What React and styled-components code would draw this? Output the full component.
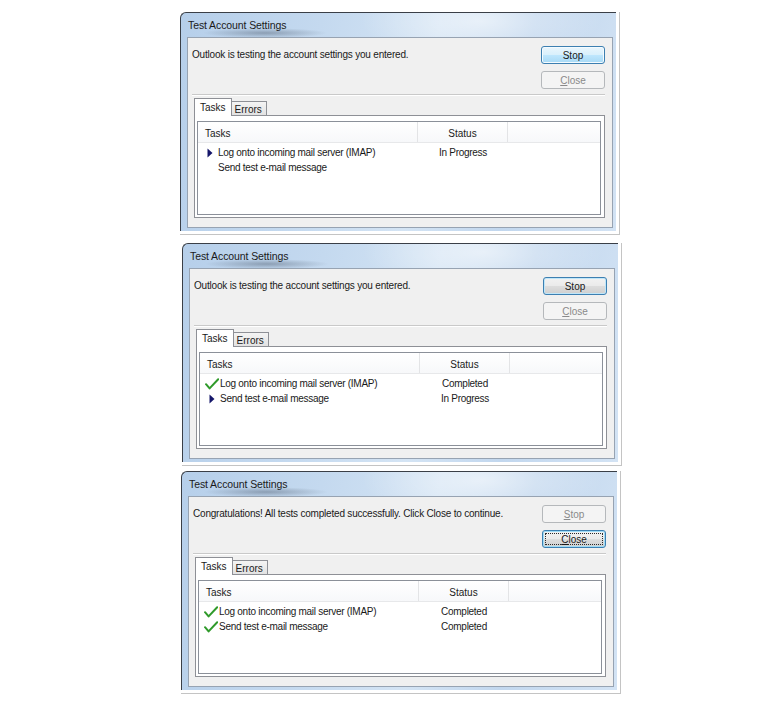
import React from "react";
import styled, { createGlobalStyle } from "styled-components";

const GlobalStyle = createGlobalStyle`
  body {
    margin: 0;
    background: #ffffff;
    font-family: "Liberation Sans", Arial, sans-serif;
  }
`;

const dialogs = [
  {
    shift: 0,
    gap: 0,
    message: "Outlook is testing the account settings you entered.",
    stop: "hot",
    close: "disabled",
    stopKey: false,
    tasks: [
      { name: "Log onto incoming mail server (IMAP)", icon: "arrow", status: "In Progress" },
      { name: "Send test e-mail message", icon: null, status: "" },
    ],
  },
  {
    shift: 2,
    gap: 8,
    message: "Outlook is testing the account settings you entered.",
    stop: "default",
    close: "disabled",
    stopKey: false,
    tasks: [
      { name: "Log onto incoming mail server (IMAP)", icon: "check", status: "Completed" },
      { name: "Send test e-mail message", icon: "arrow", status: "In Progress" },
    ],
  },
  {
    shift: 1,
    gap: 5,
    message:
      "Congratulations! All tests completed successfully. Click Close to continue.",
    stop: "disabled",
    close: "focused",
    stopKey: true,
    tasks: [
      { name: "Log onto incoming mail server (IMAP)", icon: "check", status: "Completed" },
      { name: "Send test e-mail message", icon: "check", status: "Completed" },
    ],
  },
];

const Arrow = () => (
  <svg width="6" height="10" viewBox="0 0 6 10">
    <polygon points="0.5,0.5 5.5,5 0.5,9.5" fill="#15166a" />
  </svg>
);

const Check = () => (
  <svg width="14" height="12" viewBox="0 0 14 12">
    <path
      d="M1 6.2 L4.6 10.4 L13.2 1.2"
      fill="none"
      stroke="#2f9a2a"
      strokeWidth="2"
      strokeLinecap="round"
      strokeLinejoin="round"
    />
  </svg>
);

const Dialog = ({ d }) => (
  <Shot $shift={d.shift} $gap={d.gap}>
    <Frame>
      <TitleBar>Test Account Settings</TitleBar>
      <Body>
        <TopRow>
          <Message>{d.message}</Message>
          <Buttons>
            <Button $kind={d.stop}>
              <Label $kind={d.stop}>
                {d.stopKey ? (
                  <>
                    <u>S</u>top
                  </>
                ) : (
                  "Stop"
                )}
              </Label>
            </Button>
            <Button $kind={d.close}>
              <Label $kind={d.close}>
                <u>C</u>lose
              </Label>
            </Button>
          </Buttons>
        </TopRow>
        <Separator />
        <TabStrip>
          <Tab $active>Tasks</Tab>
          <Tab>Errors</Tab>
        </TabStrip>
        <TabPanel>
          <List>
            <HeaderRow>
              <HeadCell $w={220} $first>
                Tasks
              </HeadCell>
              <HeadCell $w={90} $center>
                Status
              </HeadCell>
              <HeadCell $grow />
            </HeaderRow>
            <Rows>
              {d.tasks.map((t) => (
                <Row key={t.name}>
                  <IconCell>
                    {t.icon === "arrow" && <Arrow />}
                    {t.icon === "check" && <Check />}
                  </IconCell>
                  <NameCell>{t.name}</NameCell>
                  <StatusCell>{t.status}</StatusCell>
                </Row>
              ))}
            </Rows>
          </List>
        </TabPanel>
      </Body>
    </Frame>
  </Shot>
);

export default function App() {
  return (
    <>
      <GlobalStyle />
      <Page>
        {dialogs.map((d, i) => (
          <Dialog key={i} d={d} />
        ))}
      </Page>
    </>
  );
}

const Page = styled.div`
  padding: 12px 0 0 180px;
  display: flex;
  flex-direction: column;
  align-items: flex-start;
`;

const Shot = styled.div`
  width: 440px;
  box-sizing: border-box;
  margin-left: ${(p) => p.$shift}px;
  margin-top: ${(p) => p.$gap}px;
  padding: 0 3px 3px 0;
  border-right: 1px solid #c4c4c4;
  border-bottom: 1px solid #c4c4c4;
  background: #ffffff;
`;

const Frame = styled.div`
  border-top: 1px solid #3a3f47;
  border-left: 1px solid #3a3f47;
  border-top-left-radius: 6px;
  padding: 0 3px 3px 6px;
  background:
    radial-gradient(ellipse 62px 5px at 84px 20px, rgba(70, 82, 100, 0.42), rgba(70, 82, 100, 0) 100%),
    radial-gradient(ellipse 120px 40px at 300px 8px, rgba(255, 255, 255, 0.55), rgba(255, 255, 255, 0) 100%),
    linear-gradient(100deg, #b6cfea 0%, #c4d9ef 30%, #d4e4f4 55%, #c2d7ee 75%, #d3e3f4 100%);
`;

const TitleBar = styled.div`
  height: 24px;
  line-height: 25px;
  padding-left: 1px;
  font-size: 10.5px;
  letter-spacing: -0.1px;
  color: #1a1a1a;
`;

const Body = styled.div`
  border: 1px solid #97a3b2;
  background: #f0f0f0;
  padding: 8px 7px 9px 4px;
  display: flex;
  flex-direction: column;
`;

const TopRow = styled.div`
  display: flex;
  justify-content: space-between;
  align-items: flex-start;
`;

const Message = styled.div`
  font-size: 10px;
  letter-spacing: -0.2px;
  color: #1a1a1a;
  padding-top: 2px;
  line-height: 14px;
`;

const Buttons = styled.div`
  display: flex;
  flex-direction: column;
  gap: 7px;
`;

const buttonLook = {
  hot: `
    border-color: #3c7fb1;
    background: linear-gradient(#eaf6fd 0%, #d9f0fc 48%, #bee6fd 52%, #a7d9f5 100%);
    box-shadow: inset 0 0 0 1px #f4fbff;
    color: #1a1a1a;
  `,
  default: `
    border-color: #3c7fb1;
    background: linear-gradient(#f2f2f2 0%, #ebebeb 48%, #dddddd 52%, #cfcfcf 100%);
    box-shadow: inset 0 0 0 1px #bfe6f9;
    color: #1a1a1a;
  `,
  focused: `
    border-color: #3c7fb1;
    background: linear-gradient(#f2f2f2 0%, #ebebeb 48%, #dddddd 52%, #cfcfcf 100%);
    box-shadow: inset 0 0 0 1px #9fdcf7;
    color: #1a1a1a;
  `,
  disabled: `
    border-color: #b5b8bb;
    background: #f4f4f4;
    color: #8a8a8a;
  `,
};

const Button = styled.div`
  width: 64px;
  height: 18px;
  box-sizing: border-box;
  border: 1px solid;
  border-radius: 3px;
  display: flex;
  align-items: center;
  justify-content: center;
  padding: 2px;
  font-size: 10px;
  ${(p) => buttonLook[p.$kind]}
`;

const Label = styled.span`
  flex: 1;
  align-self: stretch;
  display: flex;
  align-items: center;
  justify-content: center;
  border: 1px dotted ${(p) => (p.$kind === "focused" ? "#2a2a2a" : "transparent")};
  u {
    text-decoration-thickness: 1px;
    text-underline-offset: 1px;
  }
`;

const Separator = styled.div`
  margin-top: 5px;
  height: 0;
  border-top: 1px solid #c9c9c9;
  border-bottom: 1px solid #ffffff;
`;

const TabStrip = styled.div`
  margin: 2px 0 0 2px;
  display: flex;
  align-items: flex-end;
  position: relative;
  z-index: 1;
`;

const Tab = styled.div`
  box-sizing: border-box;
  font-size: 10px;
  color: #1a1a1a;
  border: 1px solid #8e9096;
  border-bottom: none;
  ${(p) =>
    p.$active
      ? `
    height: 18px;
    padding: 3px 5px 0 5px;
    background: #ffffff;
    margin-bottom: -1px;
  `
      : `
    height: 14px;
    padding: 2px 4px 0 3px;
    border-left: none;
    background: linear-gradient(#f4f4f4, #e2e2e2);
  `}
`;

const TabPanel = styled.div`
  margin-left: 2px;
  border: 1px solid #8e9096;
  background: #ffffff;
  padding: 5px 3px 2px 2px;
`;

const List = styled.div`
  height: 94px;
  box-sizing: border-box;
  border: 1px solid #8b9099;
  background: #ffffff;
  font-size: 10px;
  color: #1a1a1a;
`;

const HeaderRow = styled.div`
  display: flex;
  height: 21px;
  box-sizing: border-box;
  border-bottom: 1px solid #e7e8ea;
  background: linear-gradient(#ffffff, #f7f8fa);
`;

const HeadCell = styled.div`
  ${(p) => (p.$grow ? "flex: 1;" : `width: ${p.$w}px;`)}
  box-sizing: border-box;
  display: flex;
  align-items: center;
  justify-content: ${(p) => (p.$center ? "center" : "flex-start")};
  padding-top: 2px;
  padding-left: ${(p) => (p.$first ? 7 : 0)}px;
  border-right: ${(p) => (p.$grow ? "none" : "1px solid #e3e4e6")};
`;

const Rows = styled.div`
  padding-top: 2px;
  letter-spacing: -0.28px;
`;

const Row = styled.div`
  display: flex;
  align-items: center;
  height: 15px;
`;

const IconCell = styled.div`
  width: 20px;
  padding-left: 4px;
  box-sizing: border-box;
  display: flex;
  justify-content: center;
  align-items: center;
`;

const NameCell = styled.div`
  width: 200px;
`;

const StatusCell = styled.div`
  width: 90px;
  text-align: center;
`;
